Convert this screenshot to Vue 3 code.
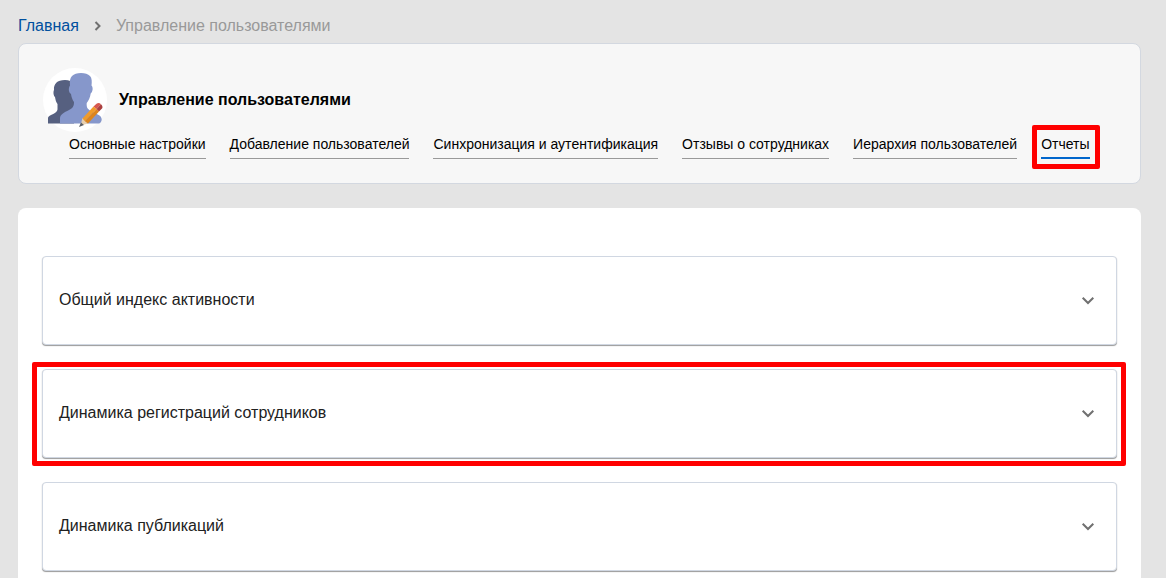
<template>
  <div class="page">
    <nav class="breadcrumbs" aria-label="Навигация">
      <a href="#">Главная</a>
      <svg width="9" height="12" viewBox="0 0 9 12" aria-hidden="true">
        <path d="M2.500 2l4 4-4 4" />
      </svg>
      <span>Управление пользователями</span>
    </nav>

    <header class="section-header">
      <div class="section-title">
        <svg class="section-icon" width="64" height="64" viewBox="0 0 64 64" aria-hidden="true">
          <circle cx="32" cy="32" r="32" fill="#fff" />
          <path
            fill="#566080"
            d="M5 55.500V50c0-1 1-2 3-3 5-2 6.500-4 6.500-6v-5c-1.500-2-2-4-2.500-7-1.500-1-2-5-1-7-.5-6 3-10 11-10 4 0 7 1.500 9 4v39.500z"
          />
          <path
            fill="#8697cb"
            d="M17 55.500v-5c0-4 4-6 9-8.500 4-2 5-4 5-8-1.500-2-2.500-4.500-3-8-2.500-1.500-2.800-6-1-8.500-.5-4 0-7.500 2-9.500 2-2 5-3 9-3s7 1 9 3 2 6 1.500 9.500c1.800 2 1.500 6-.8 8-.5 4-2 7-4 9.500-.3 5 1 6.500 6 9 5 2.500 9 3.500 9 7.500 0 2-1.500 4-3 4z"
          />
          <path fill="#e8cfae" d="M37.500 57.500l2-7.500 5.500 5.500z" />
          <path fill="#5c5f66" d="M36 59l2-4.500 3 2.500z" />
          <path fill="#f09b2a" d="M39.500 50.500L50.500 38.500l3 2.500L42 53.200z" />
          <path fill="#dd841c" d="M42 53.200L53.500 41l2.500 2.500L45 55.500z" />
          <path fill="#d7584f" d="M50.500 38.500l3-2.800c1.500-1.200 3-1 4.500.5l-4.500 4.800z" />
          <path fill="#aa4040" d="M53.500 41l4.500-4.800c1.800 1.800 1.800 3.300 1 4.300l-3 3z" />
        </svg>
        <h1>Управление пользователями</h1>
      </div>

      <nav class="tabs" aria-label="Разделы">
        <a
          v-for="tab in tabs"
          :key="tab"
          href="#"
          class="tab"
          :class="{ active: tab === activeTab }"
          @click.prevent="activeTab = tab"
        >
          {{ tab }}
          <span v-if="tab === 'Отчеты'" class="highlight"></span>
        </a>
      </nav>
    </header>

    <main class="content">
      <ul class="reports">
        <li v-for="report in reports" :key="report.title">
          <button type="button" class="report">
            <span>{{ report.title }}</span>
            <svg width="24" height="24" viewBox="0 0 24 24" aria-hidden="true">
              <path d="M6.700 9.700l5.300 5.300 5.300-5.300" />
            </svg>
          </button>
          <span v-if="report.marked" class="highlight"></span>
        </li>
      </ul>
    </main>
  </div>
</template>

<script setup>
import { ref } from 'vue';

const tabs = [
  'Основные настройки',
  'Добавление пользователей',
  'Синхронизация и аутентификация',
  'Отзывы о сотрудниках',
  'Иерархия пользователей',
  'Отчеты'
];
const activeTab = ref('Отчеты');

const reports = [
  { title: 'Общий индекс активности' },
  { title: 'Динамика регистраций сотрудников', marked: true },
  { title: 'Динамика публикаций' }
];
</script>

<style>
body {
  background: #e4e4e4;
}
</style>

<style scoped>
.page {
  box-sizing: border-box;
  min-height: 100vh;
  display: flex;
  flex-direction: column;
  padding: 0 25px 0 18px;
  background: #e4e4e4;
  color: #000;
  font-family: "Liberation Sans", Arial, sans-serif;
  font-size: 16px;
  line-height: 20px;
}

.breadcrumbs {
  display: flex;
  align-items: center;
  gap: 14px;
  padding: 16px 0 7px;
  color: #999;
}

.breadcrumbs a {
  color: #004f9e;
  text-decoration: none;
}

.breadcrumbs svg,
.report svg {
  flex-shrink: 0;
  fill: none;
  stroke: #707070;
  stroke-width: 2;
}

.section-header {
  padding: 24px;
  background: #f7f7f7;
  border: 1px solid #d3d8e0;
  border-radius: 8px;
}

.section-title {
  display: flex;
  align-items: center;
  gap: 12px;
}

.section-icon {
  flex-shrink: 0;
}

h1 {
  margin: 0;
  font-size: 16px;
  font-weight: 700;
}

.tabs {
  display: flex;
  gap: 24px;
  padding-left: 26px;
}

.tab {
  box-sizing: border-box;
  position: relative;
  height: 27px;
  padding-top: 3px;
  border-bottom: 1px solid #999;
  color: #000;
  font-size: 14px;
  line-height: 18px;
  text-decoration: none;
  white-space: nowrap;
}

.tab.active {
  border-bottom: 2px solid #0066cc;
}

.content {
  flex: 1;
  margin-top: 24px;
  padding: 48px 24px 0;
  background: #fff;
  border-radius: 8px 8px 0 0;
}

.reports {
  display: flex;
  flex-direction: column;
  gap: 24px;
  margin: 0;
  padding: 0;
  list-style: none;
}

.reports li {
  position: relative;
}

.report {
  box-sizing: border-box;
  width: 100%;
  min-height: 89px;
  display: flex;
  align-items: center;
  justify-content: space-between;
  padding: 0 16px 2px;
  background: #fff;
  border: 1px solid #d0d7e2;
  border-radius: 4px;
  box-shadow: 0 1px 1px rgba(0, 0, 0, 0.4);
  color: #212121;
  font: inherit;
  text-align: left;
  cursor: pointer;
}

/* red frame around the current step */
.highlight {
  position: absolute;
  inset: -7px -9px -8px -10px;
  border: 5px solid #f00;
  border-radius: 2px;
  pointer-events: none;
}

.tab .highlight {
  inset: -7px -10px -12px -9px;
}
</style>
